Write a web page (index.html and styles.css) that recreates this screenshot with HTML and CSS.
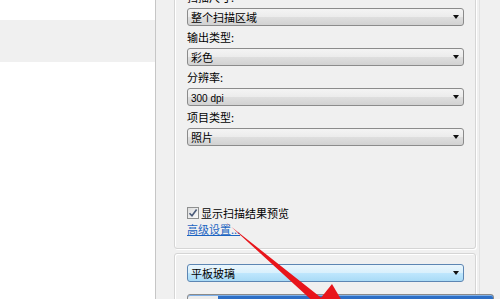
FILE: index.html
```html
<!DOCTYPE html>
<html lang="zh-CN">
<head>
    <meta charset="UTF-8">
    <title>新扫描</title>
    <link rel="stylesheet" href="styles.css">
</head>
<body>
    <div class="window">
        <div class="sidebar">
            <div class="side-band"></div>
        </div>

        <div class="settings">
            <div class="group group-top">
                <div class="field-label">扫描尺寸:</div>
                <div class="combo"><span>整个扫描区域</span><i class="caret"></i></div>

                <div class="field-label">输出类型:</div>
                <div class="combo"><span>彩色</span><i class="caret"></i></div>

                <div class="field-label">分辨率:</div>
                <div class="combo"><span class="latin">300 dpi</span><i class="caret"></i></div>

                <div class="field-label">项目类型:</div>
                <div class="combo"><span>照片</span><i class="caret"></i></div>

                <div class="spacer"></div>

                <label class="check">
                    <span class="check-box">
                        <svg width="10" height="10" viewBox="0 0 10 10">
                            <path d="M1.5 5.2 L4 7.8 L8.6 1.6" fill="none" stroke="#4a5a78" stroke-width="1.6"/>
                        </svg>
                    </span>
                    显示扫描结果预览
                </label>
                <a class="link" href="#">高级设置...</a>
            </div>

            <div class="group group-bottom">
                <div class="combo combo-hot"><span>平板玻璃</span><i class="caret"></i></div>
            </div>
        </div>

        <div class="rail"></div>

        <div class="scan-bar"></div>

        <!-- annotation arrow drawn over the dialog -->
        <svg class="arrow" width="500" height="299" viewBox="0 0 500 299">
            <polygon points="226,222 229,225 324,300 318,306" fill="#e8151b"/>
            <polygon points="332,284 312,309 352,318" fill="#e8151b"/>
        </svg>
    </div>
</body>
</html>
```

FILE: styles.css
```css
body {
    margin: 0;
    padding: 0;
    font-family: "Noto Sans CJK SC", "Noto Sans", sans-serif;
    font-size: 11px;
    color: #000;
    background-color: #fff;
}

.window {
    position: relative;
    display: flex;
    width: 500px;
    height: 299px;
    overflow: hidden;
}

.sidebar {
    width: 155px;
    flex: 0 0 155px;
    background-color: #fff;
    border-right: 1px solid #c6c6c6;
}

.side-band {
    margin-top: 20px;
    height: 42px;
    background-color: #f0f0f0;
}

.settings {
    flex: 0 0 auto;
    padding: 0 3px 0 18px;
    background-color: #f0f0f0;
}

.rail {
    flex: 1;
    background-color: #f0f0f0;
    border-left: 1px solid #e2e2e2;
}

.group {
    width: 277px;
    border: 1px solid #d5d5d5;
    border-radius: 3px;
    box-shadow: inset 1px 1px 0 #fff, 1px 1px 0 #fff;
    padding-left: 12px;
    padding-right: 11px;
}

.group-top {
    margin-top: -27px;
    padding-top: 12px;
    padding-bottom: 11px;
}

.group-bottom {
    margin-top: 4px;
    padding-top: 10px;
    height: 80px;
}

.field-label {
    height: 22px;
    line-height: 22px;
}

.combo {
    position: relative;
    box-sizing: border-box;
    height: 18px;
    line-height: 16px;
    padding-left: 3px;
    border: 1px solid #8b8b8b;
    border-radius: 3px;
    background: linear-gradient(#f4f4f4 0%, #ececec 48%, #dedede 52%, #d2d2d2 100%);
}

.combo .latin {
    font-family: "Liberation Sans", Arial, sans-serif;
    font-size: 10px;
}

.combo-hot {
    border-color: #5d86b3;
    background: linear-gradient(#eaf6fd 0%, #d9f0fc 48%, #bee6fd 52%, #a9dbf6 100%);
}

.caret {
    position: absolute;
    right: 4px;
    top: 6px;
    width: 0;
    height: 0;
    border-left: 3.5px solid transparent;
    border-right: 3.5px solid transparent;
    border-top: 4px solid #111;
}

.spacer {
    height: 59px;
}

.check {
    display: flex;
    align-items: center;
    gap: 2px;
    height: 16px;
}

.check-box {
    display: flex;
    align-items: center;
    justify-content: center;
    box-sizing: border-box;
    width: 12px;
    height: 12px;
    border: 1px solid #8e8f8f;
    background: linear-gradient(135deg, #dcdcdc, #fbfbfb);
}

.link {
    display: block;
    height: 16px;
    line-height: 16px;
    width: max-content;
    color: #1b64c2;
    text-decoration: underline;
}

.scan-bar {
    position: absolute;
    left: 187px;
    top: 294px;
    width: 305px;
    height: 14px;
    border: 1px solid #8a8a8a;
    border-radius: 3px;
    background: linear-gradient(to right, #ececec 30px, #2d6fc6 30px);
    box-shadow: inset 0 1px 0 #7fb0e8;
}

.arrow {
    position: absolute;
    left: 0;
    top: 0;
    pointer-events: none;
}
```
